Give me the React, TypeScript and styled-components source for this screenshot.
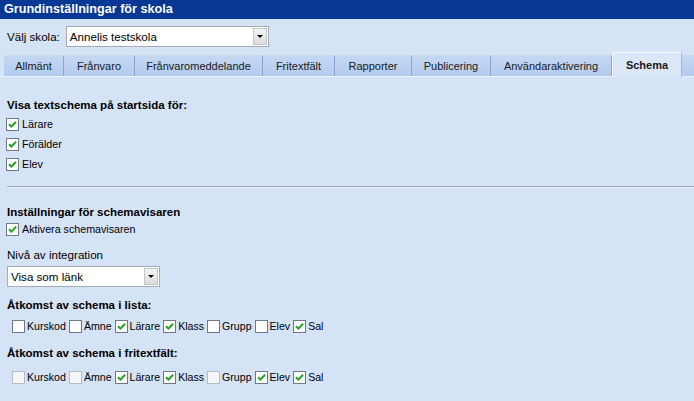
import React from "react";
import styled, { createGlobalStyle } from "styled-components";

const GlobalStyle = createGlobalStyle`
    html, body {
        margin: 0;
        padding: 0;
        background: #d5e3f6;
    }
    body {
        font-family: "Liberation Sans", Arial, sans-serif;
        font-size: 11px;
        color: #000;
    }
`;

const Page = styled.div`
    width: 694px;
    height: 401px;
    overflow: hidden;
    background: #d5e3f6;
`;

const TitleBar = styled.div`
    height: 19px;
    background: #063894;
    color: #fff;
    font-weight: bold;
    font-size: 12.6px;
    line-height: 19px;
    padding-left: 4px;
`;

const SchoolRow = styled.div`
    display: flex;
    align-items: center;
    gap: 6px;
    padding: 7px 0 0 7px;
    height: 21px;
`;

const Label = styled.span`
    font-size: 11.6px;
`;

const Select = styled.div<{ width: number }>`
    width: ${p => p.width}px;
    height: 21px;
    box-sizing: border-box;
    border: 1px solid #a5acb5;
    background: #fff;
    display: flex;
    align-items: center;
    justify-content: space-between;
    padding-left: 3px;
    font-size: 11.6px;
`;

const SelectArrow = styled.div`
    width: 14px;
    height: 17px;
    margin-right: 1px;
    box-sizing: border-box;
    border: 1px solid #c3c7cc;
    background: linear-gradient(#f4f4f4, #dcdcdc);
    display: flex;
    align-items: center;
    justify-content: center;
    &::after {
        content: "";
        border-left: 3px solid transparent;
        border-right: 3px solid transparent;
        border-top: 3px solid #000;
    }
`;

const TabStrip = styled.div`
    display: flex;
    align-items: flex-end;
    margin-top: 5px;
    padding-left: 4px;
    height: 24px;
    border-bottom: 1px solid #eef3fb;
`;

const Tab = styled.div<{ active?: boolean; w: number }>`
    flex: none;
    width: ${p => p.w}px;
    height: ${p => (p.active ? 25 : 21)}px;
    line-height: ${p => (p.active ? 24 : 20)}px;
    text-align: center;
    box-sizing: border-box;
    font-size: 11px;
    font-weight: ${p => (p.active ? "bold" : "normal")};
    color: #1a1a1a;
    background: ${p => (p.active ? "#dbe7f7" : "linear-gradient(#c4d8f3, #b3cbef)")};
    border-right: 1px solid ${p => (p.active ? "#a4b7d2" : "#8aa6cf")};
    border-top: 1px solid ${p => (p.active ? "#f3f7fd" : "#c9dbf3")};
    border-left: ${p => (p.active ? "1px solid #f3f7fd" : "none")};
    margin-bottom: ${p => (p.active ? -1 : 0)}px;
`;

const TabFiller = styled.div`
    flex: 1;
    height: 21px;
    background: linear-gradient(#c4d8f3, #b3cbef);
`;

const Content = styled.div`
    padding: 20px 0 0 0;
`;

const Section = styled.div`
    padding: 0 7px;
`;

const Heading = styled.div`
    font-weight: bold;
    font-size: 11.5px;
    height: 17px;
    line-height: 17px;
`;

const CheckRow = styled.label<{ h?: number }>`
    display: flex;
    align-items: center;
    gap: 3px;
    height: ${p => p.h ?? 20}px;
    font-size: 10.7px;
    margin-left: -1px;
`;

const InlineRow = styled.div<{ top: number }>`
    display: flex;
    align-items: center;
    height: 20px;
    margin-top: ${p => p.top}px;
    padding-left: 5px;
    font-size: 10.6px;
`;

const InlineText = styled.span`
    margin: 0 3px 0 2px;
`;

const Box = styled.span<{ faded?: boolean }>`
    flex: none;
    width: 13px;
    height: 13px;
    box-sizing: border-box;
    border: 1px solid ${p => (p.faded ? "#b6bcc4" : "#707a86")};
    background: ${p => (p.faded ? "#f4f6f8" : "#fff")};
    display: inline-flex;
    align-items: center;
    justify-content: center;
`;

const Divider = styled.hr`
    border: none;
    border-top: 1px solid #9da6b1;
    border-bottom: 1px solid #eef3fb;
    margin: 12px 0 16px 7px;
`;

const SubLabel = styled.div`
    font-size: 11.6px;
    margin-top: 9px;
    height: 18px;
    line-height: 18px;
`;

const Spacer = styled.div<{ h: number }>`
    height: ${p => p.h}px;
`;

const Check = ({ checked, faded }: { checked: boolean; faded?: boolean }) => (
    <Box faded={faded}>
        {checked ? (
            <svg width="9" height="9" viewBox="0 0 9 9">
                <path d="M1 4.2 L3.4 6.6 L8 1.8" fill="none" stroke="#21a321" strokeWidth="2" />
            </svg>
        ) : null}
    </Box>
);

const tabs = [
    { name: "Allmänt", w: 60 },
    { name: "Frånvaro", w: 71 },
    { name: "Frånvaromeddelande", w: 128 },
    { name: "Fritextfält", w: 72 },
    { name: "Rapporter", w: 77 },
    { name: "Publicering", w: 79 },
    { name: "Användaraktivering", w: 121 },
];

const listAccess = [
    ["Kurskod", false], ["Ämne", false], ["Lärare", true], ["Klass", true],
    ["Grupp", false], ["Elev", false], ["Sal", true],
] as [string, boolean][];

const freeAccess = [
    ["Kurskod", false], ["Ämne", false], ["Lärare", true], ["Klass", true],
    ["Grupp", false], ["Elev", true], ["Sal", true],
] as [string, boolean][];

export default function App() {
    return (
        <>
            <GlobalStyle />
            <Page>
                <TitleBar>Grundinställningar för skola</TitleBar>
                <SchoolRow>
                    <Label>Välj skola:</Label>
                    <Select width={203}>
                        Annelis testskola
                        <SelectArrow />
                    </Select>
                </SchoolRow>
                <TabStrip>
                    {tabs.map(t => (
                        <Tab key={t.name} w={t.w}>{t.name}</Tab>
                    ))}
                    <Tab active w={70}>Schema</Tab>
                    <TabFiller />
                </TabStrip>
                <Content>
                    <Section>
                        <Heading>Visa textschema på startsida för:</Heading>
                        <CheckRow><Check checked />Lärare</CheckRow>
                        <CheckRow><Check checked />Förälder</CheckRow>
                        <CheckRow><Check checked />Elev</CheckRow>
                    </Section>
                    <Divider />
                    <Section>
                        <Heading>Inställningar för schemavisaren</Heading>
                        <CheckRow h={16}><Check checked />Aktivera schemavisaren</CheckRow>
                        <SubLabel>Nivå av integration</SubLabel>
                        <Select width={153} style={{ marginTop: 2 }}>
                            Visa som länk
                            <SelectArrow />
                        </Select>
                        <Spacer h={10} />
                        <Heading>Åtkomst av schema i lista:</Heading>
                        <InlineRow top={2}>
                            {listAccess.map(([n, c]) => (
                                <React.Fragment key={n}><Check checked={c} /><InlineText>{n}</InlineText></React.Fragment>
                            ))}
                        </InlineRow>
                        <Spacer h={9} />
                        <Heading>Åtkomst av schema i fritextfält:</Heading>
                        <InlineRow top={5}>
                            {freeAccess.map(([n, c]) => (
                                <React.Fragment key={n}><Check checked={c} faded={!c} /><InlineText>{n}</InlineText></React.Fragment>
                            ))}
                        </InlineRow>
                    </Section>
                </Content>
            </Page>
        </>
    );
}
